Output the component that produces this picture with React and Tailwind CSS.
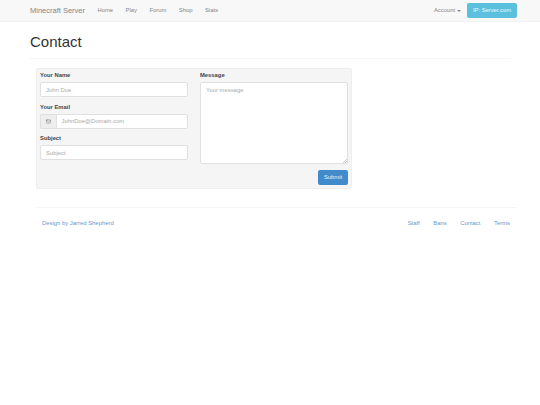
import React from "react";
import { Mail } from "lucide-react";

const navLinks = ["Home", "Play", "Forum", "Shop", "Stats"];
const footerLinks = ["Staff", "Bans", "Contact", "Terms"];

const inputClass =
  "block w-full h-[15px] px-[5px] bg-white border border-[#e0e0e0] rounded-[2px] text-[5.9px] text-[#555] placeholder:text-[#aaa] outline-none";

const labelClass =
  "block mb-[2px] h-[9px] leading-[9px] text-[5.83px] font-bold text-[#444]";

const Field = ({ label, children }) => (
  <div className="mb-[5.5px]">
    <label className={labelClass}>{label}</label>
    {children}
  </div>
);

const App = () => {
  return (
    <div className="min-h-[405px] bg-white font-['Liberation_Sans',Arial,sans-serif]">
      <nav className="h-[22px] bg-[#f8f8f8] border-b border-[#f1f1f1] pl-[30px] pr-[23px] flex items-center">
        <span className="text-[7.5px] text-[#858585] mr-[12.5px]">Minecraft Server</span>
        <div className="flex gap-[12.5px] text-[5.83px] text-[#858585]">
          {navLinks.map((link) => (
            <a key={link}>{link}</a>
          ))}
        </div>
        <div className="ml-auto flex items-center text-[5.83px] text-[#858585]">
          <span>Account</span>
          <span className="ml-[2px] mr-[6px] w-0 h-0 border-x-[2px] border-x-transparent border-t-[2px] border-t-[#858585]" />
          <button className="h-[15px] w-[50px] bg-[#5bc0de] rounded-[2px] text-[#eef9fc] text-[5.83px]">
            IP: Server.com
          </button>
        </div>
      </nav>

      <div className="px-[30px]">
        <div className="pt-[11px] pb-[7px] mr-[-1px] border-b border-[#f5f5f5] mb-[9px]">
          <h1 className="text-[15px] leading-[18px] text-[#333]">Contact</h1>
        </div>

        <form className="ml-[6px] w-[316px] h-[121px] bg-[#f5f5f5] border border-[#eeeeee] rounded-[2px] px-[3px] pt-[2px] flex gap-[12px]">
          <div className="w-[148px]">
            <Field label="Your Name">
              <input className={inputClass} placeholder="John Doe" />
            </Field>
            <Field label="Your Email">
              <div className="flex">
                <span className="w-[15.5px] h-[15px] shrink-0 flex items-center justify-center bg-[#eee] border border-r-0 border-[#e0e0e0] rounded-l-[2px] text-[#666]">
                  <Mail size={5} strokeWidth={2} />
                </span>
                <input
                  className={inputClass + " rounded-l-none"}
                  placeholder="JohnDoe@Domain.com"
                />
              </div>
            </Field>
            <Field label="Subject">
              <input className={inputClass} placeholder="Subject" />
            </Field>
          </div>
          <div className="w-[148px] flex flex-col">
            <label className={labelClass}>Message</label>
            <div className="relative">
              <textarea
                className="block w-full h-[82px] px-[5px] py-[3px] bg-white border border-[#e0e0e0] rounded-[2px] text-[5.9px] placeholder:text-[#aaa] outline-none resize-none"
                placeholder="Your message"
              />
              <svg className="absolute right-[1px] bottom-[1px]" width="4" height="4" viewBox="0 0 4 4">
                <path d="M4 0 L0 4 M4 2 L2 4" stroke="#999" strokeWidth="0.5" />
              </svg>
            </div>
            <div className="flex justify-end mt-[6px]">
              <button
                type="button"
                className="w-[30px] h-[15px] bg-[#428bca] rounded-[2px] text-[#e8f1f8] text-[5.83px]"
              >
                Submit
              </button>
            </div>
          </div>
        </form>

        <footer className="ml-[6px] mr-[-7px] mt-[18px] border-t border-[#f5f5f5] pt-[11px] pl-[6px] pr-[7px] flex justify-between text-[5.9px] text-[#5f9bd1]">
          <a>Design by Jarred Shepherd</a>
          <div className="flex gap-[13.5px]">
            {footerLinks.map((link) => (
              <a key={link}>{link}</a>
            ))}
          </div>
        </footer>
      </div>
    </div>
  );
};

export default App;
